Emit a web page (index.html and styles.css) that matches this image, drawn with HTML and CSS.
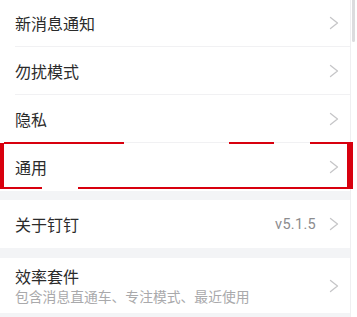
FILE: index.html
```html
<!DOCTYPE html>
<html lang="zh">
<head>
<meta charset="utf-8">
<link rel="stylesheet" href="styles.css">
</head>
<body>
<div class="screen">
  <div class="list">
    <div class="group">
      <div class="row"><span class="title">新消息通知</span><svg class="chev" viewBox="0 0 10 14"><polyline points="1.5,1.5 8.5,7 1.5,12.5"/></svg></div>
      <div class="row"><span class="title">勿扰模式</span><svg class="chev" viewBox="0 0 10 14"><polyline points="1.5,1.5 8.5,7 1.5,12.5"/></svg></div>
      <div class="row"><span class="title">隐私</span><svg class="chev" viewBox="0 0 10 14"><polyline points="1.5,1.5 8.5,7 1.5,12.5"/></svg></div>
      <div class="row last"><span class="title">通用</span><svg class="chev" viewBox="0 0 10 14"><polyline points="1.5,1.5 8.5,7 1.5,12.5"/></svg></div>
    </div>
    <div class="sep sep-a"></div>
    <div class="group">
      <div class="row last"><span class="title">关于钉钉</span><span class="meta">v5.1.5</span><svg class="chev" viewBox="0 0 10 14"><polyline points="1.5,1.5 8.5,7 1.5,12.5"/></svg></div>
    </div>
    <div class="sep sep-b"></div>
    <div class="group">
      <div class="row tall last">
        <div class="texts">
          <span class="title">效率套件</span>
          <span class="sub">包含消息直通车、专注模式、最近使用</span>
        </div>
        <svg class="chev" viewBox="0 0 10 14"><polyline points="1.5,1.5 8.5,7 1.5,12.5"/></svg>
      </div>
    </div>
    <div class="sep"></div>
  </div>
  <div class="scroll"><div class="thumb"></div></div>
  <svg class="mark" width="357" height="317" viewBox="0 0 357 317">
    <g fill="#d8000e">
      <rect x="0" y="143" width="4" height="46"/>
      <rect x="4" y="142" width="120" height="2"/>
      <rect x="229" y="142" width="45" height="2"/>
      <rect x="310" y="142" width="43" height="2"/>
      <rect x="347" y="142" width="6" height="47"/>
      <rect x="0" y="187" width="42" height="2"/>
      <rect x="78" y="187" width="275" height="2"/>
    </g>
  </svg>
</div>
</body>
</html>
```

FILE: styles.css
```css
html, body {
  margin: 0;
  padding: 0;
  background: #ffffff;
}
.screen {
  position: relative;
  width: 357px;
  height: 317px;
  overflow: hidden;
  display: flex;
  font-family: "Noto Sans CJK SC", "Noto Sans", sans-serif;
}
.list {
  width: 350px;
  margin-top: -1px;
  display: flex;
  flex-direction: column;
}
.group {
  background: #fff;
}
.row {
  height: 48px;
  box-sizing: border-box;
  display: flex;
  align-items: center;
  padding: 0 11px 0 15px;
  position: relative;
}
.row::after {
  content: "";
  position: absolute;
  left: 15px;
  right: 0;
  bottom: 0;
  height: 1px;
  background: #f1f1f3;
}
.row.last::after {
  display: none;
}
.row.tall {
  height: 55px;
}
.title {
  font-size: 16px;
  color: #2b2b2b;
  flex: 1;
  line-height: 20px;
}
.texts {
  flex: 1;
  display: flex;
  flex-direction: column;
  padding-top: 1px;
}
.texts .title {
  line-height: 19px;
  flex: none;
}
.sub {
  font-size: 13.8px;
  color: #a9a9ab;
  line-height: 18px;
  margin-top: 1px;
}
.meta {
  font-family: "Roboto", "Noto Sans", sans-serif;
  font-size: 14.5px;
  color: #8c8c8e;
  margin-right: 13px;
  letter-spacing: 0.3px;
}
.chev {
  width: 10px;
  height: 14px;
  flex: none;
  fill: none;
  stroke: #c6c6c8;
  stroke-width: 1.3;
  stroke-linecap: round;
  stroke-linejoin: round;
}
.sep {
  background: #f3f4f6;
  flex: none;
}
.sep-a { height: 9px; }
.sep-b { height: 10px; }
.list > .sep:last-child { flex: 1; }
.scroll {
  width: 7px;
  border-left: 1px solid #efeff1;
  box-sizing: border-box;
  position: relative;
}
.thumb {
  margin: 0 2px 0 1px;
  height: 42px;
  background: #dcdcde;
  border-radius: 0 0 3px 3px;
}
.mark {
  position: absolute;
  left: 0;
  top: 0;
  pointer-events: none;
}
```
